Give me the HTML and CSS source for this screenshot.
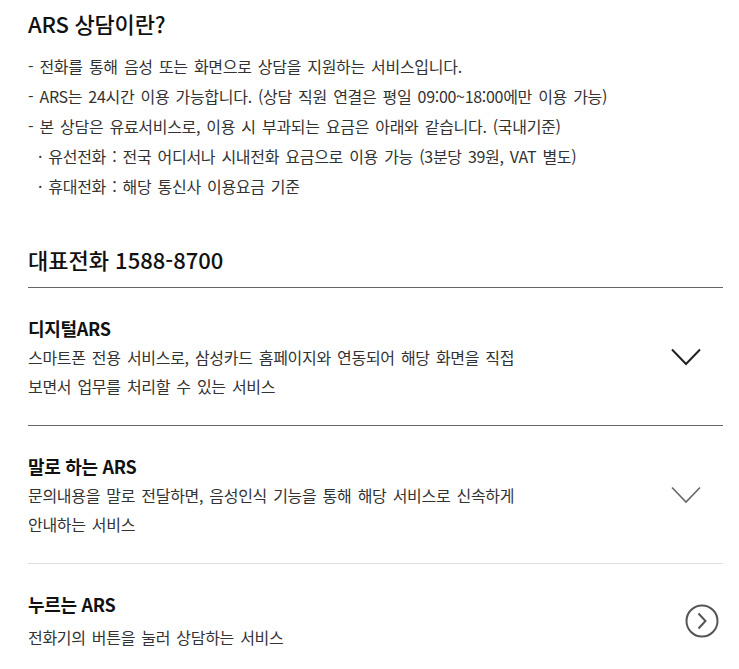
FILE: index.html
```html
<!DOCTYPE html>
<html lang="ko">
<head>
<meta charset="utf-8">
<title>ARS 상담</title>
<link rel="stylesheet" href="styles.css">
</head>
<body>
<div class="page">
  <h1 class="title">ARS 상담이란?</h1>
  <ul class="info">
    <li>- 전화를 통해 음성 또는 화면으로 상담을 지원하는 서비스입니다.</li>
    <li>- ARS는 24시간 이용 가능합니다. (상담 직원 연결은 평일 09:00~18:00에만 이용 가능)</li>
    <li>- 본 상담은 유료서비스로, 이용 시 부과되는 요금은 아래와 같습니다. (국내기준)</li>
    <li class="sub">· 유선전화 : 전국 어디서나 시내전화 요금으로 이용 가능 (3분당 39원, VAT 별도)</li>
    <li class="sub">· 휴대전화 : 해당 통신사 이용요금 기준</li>
  </ul>
  <h2 class="phone">대표전화 1588-8700</h2>
  <div class="items">
    <div class="item item-dark">
      <div class="item-text">
        <h3 class="item-title">디지털ARS</h3>
        <p class="item-desc">스마트폰 전용 서비스로, 삼성카드 홈페이지와 연동되어 해당 화면을 직접<br>보면서 업무를 처리할 수 있는 서비스</p>
      </div>
      <svg class="chev" width="30" height="18" viewBox="0 0 30 18"><path d="M1 1.5 L15 16 L29 1.5" fill="none" stroke="#222" stroke-width="2"/></svg>
    </div>
    <div class="item item-light">
      <div class="item-text">
        <h3 class="item-title">말로 하는 ARS</h3>
        <p class="item-desc">문의내용을 말로 전달하면, 음성인식 기능을 통해 해당 서비스로 신속하게<br>안내하는 서비스</p>
      </div>
      <svg class="chev" width="30" height="18" viewBox="0 0 30 18"><path d="M1 1.5 L15 16 L29 1.5" fill="none" stroke="#666" stroke-width="1.6"/></svg>
    </div>
    <div class="item item-last">
      <div class="item-text">
        <h3 class="item-title">누르는 ARS</h3>
        <p class="item-desc item-desc-gap">전화기의 버튼을 눌러 상담하는 서비스</p>
      </div>
      <svg class="circ" width="34" height="34" viewBox="0 0 34 34"><circle cx="17" cy="17" r="15.5" fill="none" stroke="#555" stroke-width="2"/><path d="M13.5 9.5 L20.5 17 L13.5 24.5" fill="none" stroke="#555" stroke-width="2"/></svg>
    </div>
  </div>
</div>
</body>
</html>
```

FILE: styles.css
```css
html, body {
  margin: 0;
  padding: 0;
  background: #fff;
}
.page {
  padding: 6px 16px 0 28px;
  font-family: "Noto Sans CJK KR", "Noto Sans", "Liberation Sans", sans-serif;
  color: #333;
}
.title {
  margin: 0;
  font-size: 22px;
  font-weight: 500;
  line-height: 34px;
  color: #111;
  letter-spacing: -0.2px;
}
.info {
  list-style: none;
  margin: 11px 0 0;
  padding: 0;
  font-size: 16px;
  line-height: 30px;
  color: #333;
  letter-spacing: -0.3px;
  word-spacing: 2px;
}
.info .sub {
  padding-left: 10px;
}
.phone {
  margin: 43px 0 0;
  padding-bottom: 13px;
  font-size: 22px;
  font-weight: 500;
  line-height: 30px;
  color: #111;
  border-bottom: 1px solid #666;
  letter-spacing: 0;
}
.item {
  display: flex;
  align-items: center;
  justify-content: space-between;
  padding: 25px 0 24px;
}
.item-dark {
  border-bottom: 1px solid #666;
}
.item-light {
  border-bottom: 1px solid #ddd;
}
.item-title {
  margin: 0;
  font-size: 18px;
  font-weight: 700;
  line-height: 30px;
  color: #111;
  letter-spacing: -0.3px;
}
.item-desc {
  margin: 0;
  font-size: 16px;
  line-height: 29px;
  color: #333;
  letter-spacing: -0.3px;
  word-spacing: 2px;
}
.item-desc-gap {
  margin-top: 4px;
}
.chev {
  margin-right: 22px;
  flex: none;
}
.circ {
  margin-right: 4px;
  flex: none;
}
```
